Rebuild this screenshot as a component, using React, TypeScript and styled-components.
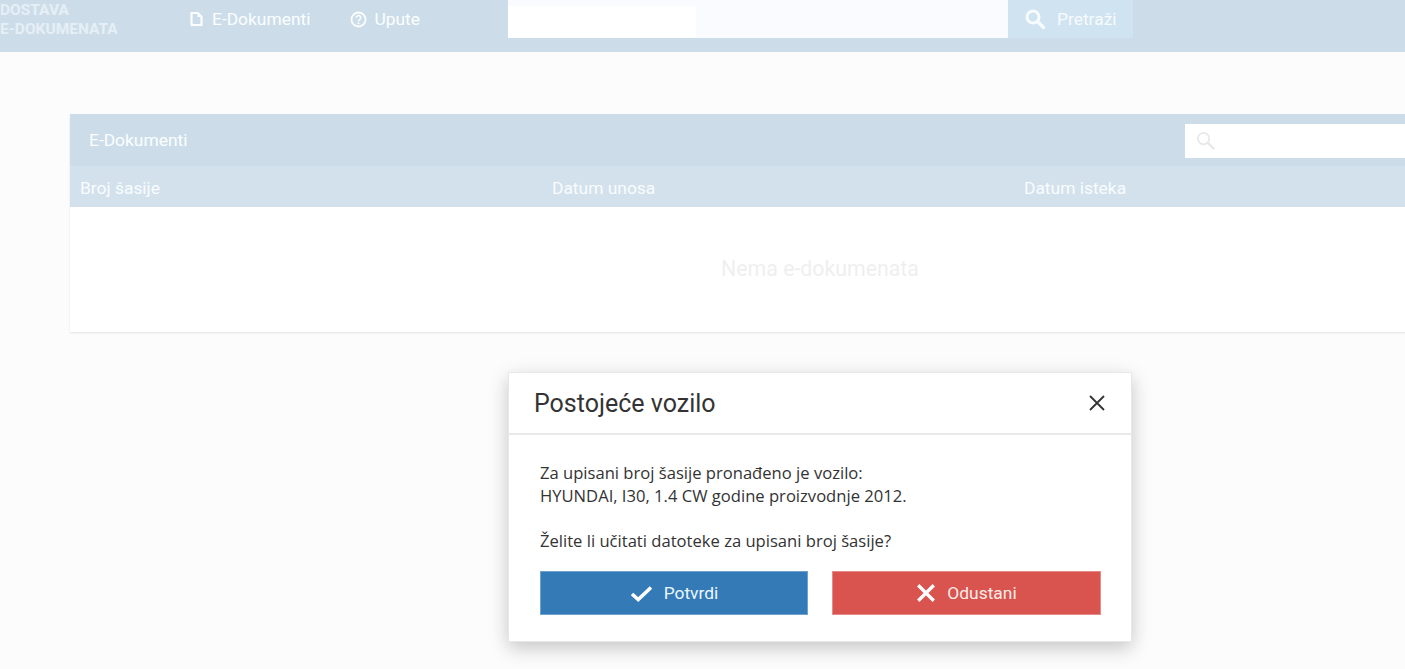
import React from "react";
import styled, { createGlobalStyle } from "styled-components";

const Global = createGlobalStyle`
  html, body { margin: 0; padding: 0; height: 100%; overflow: hidden; background: #fcfcfc; }
  body { font-family: Roboto, "Liberation Sans", sans-serif; }
  * { box-sizing: border-box; }
`;

const Page = styled.div`
  position: relative;
  width: 1405px;
  height: 669px;
  overflow: hidden;
  background: #fcfcfc;
`;

const Header = styled.header`
  display: flex;
  align-items: flex-start;
  height: 52px;
  background: #ccdde9;
  color: #fbfdfe;
`;

const Logo = styled.div`
  width: 189px;
  padding: 1px 0 0 0;
  font-size: 15.5px;
  line-height: 19px;
  font-weight: 700;
  color: #e6eff5;
`;

const Nav = styled.nav`
  display: flex;
  width: 319px;
  height: 38px;
  align-items: center;
  gap: 40px;
`;

const NavItem = styled.a`
  display: flex;
  align-items: center;
  gap: 7px;
  font-size: 17.4px;
  color: #fbfdfe;
`;

const SearchInput = styled.div`
  width: 500px;
  height: 38px;
  background: #f9fbfe;
`;

const SearchFill = styled.div`
  width: 188px;
  height: 32px;
  margin-top: 6px;
  background: #fff;
`;

const SearchButton = styled.button`
  display: flex;
  align-items: center;
  gap: 12px;
  width: 125px;
  height: 38px;
  padding: 0 0 0 17px;
  border: 0;
  background: #d0e3f0;
  color: #f7fbfd;
  font: 400 17.4px Roboto, sans-serif;
`;

const Main = styled.main`
  padding: 62px 0 0 70px;
`;

const Card = styled.section`
  width: 1416px;
  height: 218px;
  background: #fff;
  box-shadow: 0 1px 2px rgba(0, 0, 0, 0.1);
`;

const CardTitleBar = styled.div`
  display: flex;
  align-items: center;
  justify-content: space-between;
  height: 52px;
  padding: 0 0 0 19px;
  background: #ccdde9;
  color: #fbfdfe;
  font-size: 17.4px;
`;

const CardTitle = styled.span`
  margin-top: -1px;
`;

const Filter = styled.div`
  display: flex;
  align-items: center;
  width: 301px;
  height: 34px;
  margin-top: 1px;
  padding-left: 11px;
  background: #fff;
`;

const HeadRow = styled.div`
  display: grid;
  grid-template-columns: repeat(3, 472px);
  align-items: center;
  height: 41px;
  padding-top: 2px;
  background: #d2e1ec;
  color: #f9fcfd;
  font-size: 17.4px;
`;

const HeadCell = styled.div`
  padding-left: 10px;
`;

const Empty = styled.div`
  padding: 50px 0 0 84px;
  text-align: center;
  color: #efefef;
  font-size: 21.3px;
  line-height: 24px;
`;

const Modal = styled.div`
  position: absolute;
  left: 508px;
  top: 372px;
  width: 624px;
  height: 270px;
  background: #fff;
  border: 1px solid #e8e8e8;
  box-shadow: 0 6px 18px rgba(0, 0, 0, 0.22);
  color: #333;
`;

const ModalHeader = styled.div`
  display: flex;
  align-items: center;
  justify-content: space-between;
  height: 62px;
  padding: 0 25px;
  border-bottom: 2px solid #e9e9e9;
`;

const ModalTitle = styled.h2`
  margin: 0;
  font-size: 25px;
  font-weight: 400;
  color: #333;
`;

const ModalBody = styled.div`
  padding: 26px 30px 0 31px;
  font-family: "Open Sans", sans-serif;
  font-size: 16.6px;
  line-height: 23px;
`;

const Paragraph = styled.p`
  margin: 0 0 22px;
`;

const Actions = styled.div`
  display: flex;
  justify-content: space-between;
  margin-top: -3px;
`;

const ActionButton = styled.button<{ $tone: "blue" | "red" }>`
  display: flex;
  align-items: center;
  justify-content: center;
  gap: 11px;
  width: ${(p) => (p.$tone === "blue" ? "268px" : "269px")};
  height: 44px;
  padding: 0;
  background: ${(p) => (p.$tone === "blue" ? "#337ab7" : "#d9534f")};
  border: 1px solid ${(p) => (p.$tone === "blue" ? "#6fa3cf" : "#e68b88")};
  color: ${(p) => (p.$tone === "blue" ? "#ecf8ff" : "#fdeee9")};
  font: 400 17.4px Roboto, sans-serif;
`;

const DocIcon = () => (
  <svg width="16" height="16" viewBox="0 0 16 16" aria-hidden="true">
    <path d="M2.5 2h6.3l3.7 3.7V14h-10z" fill="none" stroke="#fbfdfe" strokeWidth="2.2" strokeLinejoin="round" />
    <path d="M8.5 2l4 4h-4z" fill="#fbfdfe" />
  </svg>
);

const HelpIcon = () => (
  <svg width="17" height="17" viewBox="0 0 17 17" aria-hidden="true">
    <circle cx="8.5" cy="8.5" r="7" fill="none" stroke="#fbfdfe" strokeWidth="1.8" />
    <path d="M6.3 6.8a2.2 2.2 0 1 1 3.4 1.8c-.8.5-1.2.9-1.2 1.7" fill="none" stroke="#fbfdfe" strokeWidth="1.6" />
    <circle cx="8.5" cy="12.3" r="1" fill="#fbfdfe" />
  </svg>
);

const SearchIcon = ({ size, color, sw }: { size: number; color: string; sw: number }) => (
  <svg width={size} height={size} viewBox="0 0 20 20" aria-hidden="true">
    <circle cx="8" cy="8" r="6" fill="none" stroke={color} strokeWidth={sw} />
    <path d="M12.5 12.5L18.5 18.5" stroke={color} strokeWidth={sw + 0.6} strokeLinecap="round" />
  </svg>
);

const CheckIcon = () => (
  <svg width="23" height="17" viewBox="0 0 23 17" aria-hidden="true">
    <path d="M2 9l6.2 5.5L21 2.5" fill="none" stroke="#fff" strokeWidth="3.6" />
  </svg>
);

const CrossIcon = ({ size, color, sw }: { size: number; color: string; sw: number }) => (
  <svg width={size} height={size} viewBox="0 0 18 18" aria-hidden="true">
    <path d="M2 2L16 16M16 2L2 16" fill="none" stroke={color} strokeWidth={sw} />
  </svg>
);

export default function App() {
  return (
    <Page>
      <Global />
      <Header>
        <Logo>
          DOSTAVA
          <br />
          E-DOKUMENATA
        </Logo>
        <Nav>
          <NavItem>
            <DocIcon />
            E-Dokumenti
          </NavItem>
          <NavItem>
            <HelpIcon />
            Upute
          </NavItem>
        </Nav>
        <SearchInput>
          <SearchFill />
        </SearchInput>
        <SearchButton>
          <SearchIcon size={20} color="#f7fbfd" sw={3} />
          Pretraži
        </SearchButton>
      </Header>
      <Main>
        <Card>
          <CardTitleBar>
            <CardTitle>E-Dokumenti</CardTitle>
            <Filter>
              <SearchIcon size={19} color="#e8e8e8" sw={1.8} />
            </Filter>
          </CardTitleBar>
          <HeadRow>
            <HeadCell>Broj šasije</HeadCell>
            <HeadCell>Datum unosa</HeadCell>
            <HeadCell>Datum isteka</HeadCell>
          </HeadRow>
          <Empty>Nema e-dokumenata</Empty>
        </Card>
      </Main>
      <Modal>
        <ModalHeader>
          <ModalTitle>Postojeće vozilo</ModalTitle>
          <CrossIcon size={18} color="#333" sw={1.8} />
        </ModalHeader>
        <ModalBody>
          <Paragraph>
            Za upisani broj šasije pronađeno je vozilo:
            <br />
            HYUNDAI, I30, 1.4 CW godine proizvodnje 2012.
          </Paragraph>
          <Paragraph>Želite li učitati datoteke za upisani broj šasije?</Paragraph>
          <Actions>
            <ActionButton $tone="blue">
              <CheckIcon />
              Potvrdi
            </ActionButton>
            <ActionButton $tone="red">
              <CrossIcon size={20} color="#fff" sw={3} />
              Odustani
            </ActionButton>
          </Actions>
        </ModalBody>
      </Modal>
    </Page>
  );
}
